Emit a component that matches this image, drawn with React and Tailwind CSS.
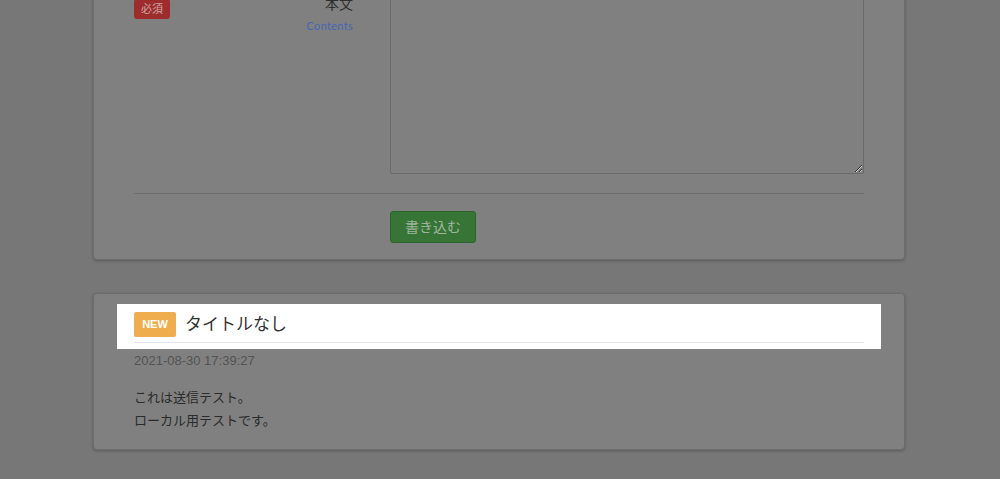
import React from "react";

const jp = { fontFamily: '"Liberation Sans", "Noto Sans CJK JP", sans-serif' };

function PostForm() {
  return (
    <div className="ml-[93px] -mt-[31px] w-[812px] rounded-[4px] border border-[#6c6c6c] bg-[#808080] px-10 pt-5 pb-[16px] shadow-[0_1px_3px_rgba(0,0,0,0.25)]">
      {/* Contents row */}
      <div className="flex gap-[37px]">
        <div className="flex w-[219px] justify-between">
          <div className="mt-[9px] h-[20px] w-[36px] shrink-0 rounded-[3px] bg-[#9c2d2c] text-center text-[11px] leading-[20px] text-[#d2a4a3]">
            必須
          </div>
          <div className="pt-[4px] text-right">
            <div className="text-[14px] leading-[20px] text-[#2e2e2e]">本文</div>
            <div
              className="mt-[6px] text-[11px] leading-[12px] tracking-[0.3px] text-[#4766b3]"
              style={{ fontFamily: "Lato, sans-serif" }}
            >
              Contents
            </div>
          </div>
        </div>
        <textarea
          className="block h-[184px] w-[474px] rounded-[2px] border border-[#6a6a6a] bg-[#808080] outline-none"
          readOnly
        />
      </div>

      <hr className="mt-[19px] border-t border-[#6e6e6e]" />

      <div className="mt-[17px] pl-[256px]">
        <button
          type="button"
          className="h-[32px] w-[86px] rounded-[3px] border border-[#2c642c] bg-[#377537] text-[14px] text-[#9db59d]"
        >
          書き込む
        </button>
      </div>
    </div>
  );
}

function PostItem() {
  return (
    <div className="ml-[93px] mt-[33px] w-[812px] rounded-[4px] border border-[#6c6c6c] bg-[#808080] px-10 pt-[10px] pb-[17px] shadow-[0_1px_3px_rgba(0,0,0,0.25)]">
      {/* highlighted title */}
      <div className="-mx-[17px] bg-white px-[17px] pt-[7px] pb-[6px]">
        <div className="flex items-center gap-[9px] border-b border-[#e6e6e6] pb-[5px] pt-px">
          <span className="flex h-[25px] w-[42px] items-center justify-center rounded-[2px] bg-[#f0ad4e] text-[11px] font-bold text-white">
            NEW
          </span>
          <span className="text-[17px] leading-[24px] text-[#333]">タイトルなし</span>
        </div>
      </div>

      <div className="mt-[3px] text-[13px] leading-[18px] text-[#535353]">2021-08-30 17:39:27</div>

      <div className="mt-[16px] text-[13px] leading-[23px] text-[#2b2b2b]">
        <p>これは送信テスト。</p>
        <p>ローカル用テストです。</p>
      </div>
    </div>
  );
}

export default function App() {
  return (
    <div className="h-[479px] overflow-hidden bg-[#777777]" style={jp}>
      <PostForm />
      <PostItem />
    </div>
  );
}
